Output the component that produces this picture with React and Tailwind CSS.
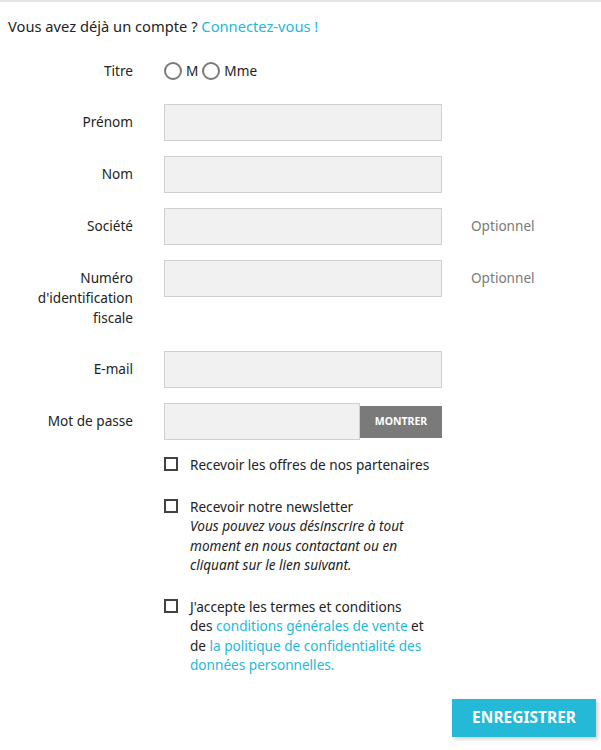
import React from 'react';

const font = { fontFamily: '"Noto Sans", "Open Sans", sans-serif' };

const Field = ({ label, children, comment }) => (
  <div className="flex items-start mb-[15px]">
    <label className="w-[133px] shrink-0 text-right py-2 leading-5 text-[#232323]">{label}</label>
    <div className="ml-[31px] w-[278px] shrink-0">{children}</div>
    {comment && <div className="ml-[29px] py-2 leading-5 text-[#7a7a7a]">{comment}</div>}
  </div>
);

const Input = ({ type = 'text' }) => (
  <input
    type={type}
    className="block w-full h-[37px] bg-[#f1f1f1] border border-[#d0d0d0] px-3 text-sm text-[#232323] focus:outline-none"
  />
);

const Radio = ({ label }) => (
  <label className="flex items-center">
    <span className="w-[18px] h-[18px] rounded-full border-2 border-[#7a7a7a] bg-white inline-block" />
    <span className="ml-[4px] leading-5 text-[#232323]">{label}</span>
  </label>
);

const Check = ({ children }) => (
  <div className="flex items-start ml-[164px] mb-[22px] leading-[19.5px] text-[#232323]">
    <span className="mt-[2px] w-[14px] h-[14px] border-2 border-[#414141] bg-white shrink-0" />
    <div className="ml-3 w-[252px]">{children}</div>
  </div>
);

const App = () => {
  return (
    <div style={font} className="w-[601px] h-[750px] bg-white border-t-2 border-[#e6e6e6] text-[13.6px] pt-[14px]">
      <p className="ml-2 leading-5 text-[14.7px] text-[#232323]">
        Vous avez déjà un compte ? <a href="#" className="text-[#24b9d7]">Connectez-vous !</a>
      </p>

      <div className="mt-4">
        <div className="flex items-center mb-[15px] h-[37px]">
          <span className="w-[133px] text-right leading-5 text-[#232323]">Titre</span>
          <div className="ml-[31px] flex items-center gap-[4px]">
            <Radio label="M" />
            <Radio label="Mme" />
          </div>
        </div>

        <Field label="Prénom"><Input /></Field>
        <Field label="Nom"><Input /></Field>
        <Field label="Société" comment="Optionnel"><Input /></Field>
        <Field label={<>Numéro<br />d'identification<br />fiscale</>} comment="Optionnel"><Input /></Field>
        <Field label="E-mail"><Input type="email" /></Field>
        <Field label="Mot de passe">
          <div className="flex items-center">
            <input
              type="password"
              className="block w-[196px] h-[37px] bg-[#f1f1f1] border border-[#d0d0d0] px-3 focus:outline-none"
            />
            <button className="w-[82px] h-[32px] bg-[#7a7a7a] text-white text-[10.5px] font-bold uppercase">
              Montrer
            </button>
          </div>
        </Field>
      </div>

      <Check>Recevoir les offres de nos partenaires</Check>
      <Check>
        Recevoir notre newsletter
        <br />
        <em>Vous pouvez vous désinscrire à tout moment en nous contactant ou en cliquant sur le lien suivant.</em>
      </Check>
      <Check>
        J'accepte les termes et conditions
        <br />
        des <a href="#" className="text-[#24b9d7]">conditions générales de vente</a> et
        <br />
        de <a href="#" className="text-[#24b9d7]">la politique de confidentialité des
        <br />
        données personnelles.</a>
      </Check>

      <div className="flex justify-end pr-[5px] mt-[24px]">
        <button className="h-[38px] px-[20px] bg-[#24b9d7] text-white font-bold text-[15.5px] uppercase shadow-[2px_2px_4px_rgba(0,0,0,0.2)]">
          Enregistrer
        </button>
      </div>
    </div>
  );
};

export default App;
